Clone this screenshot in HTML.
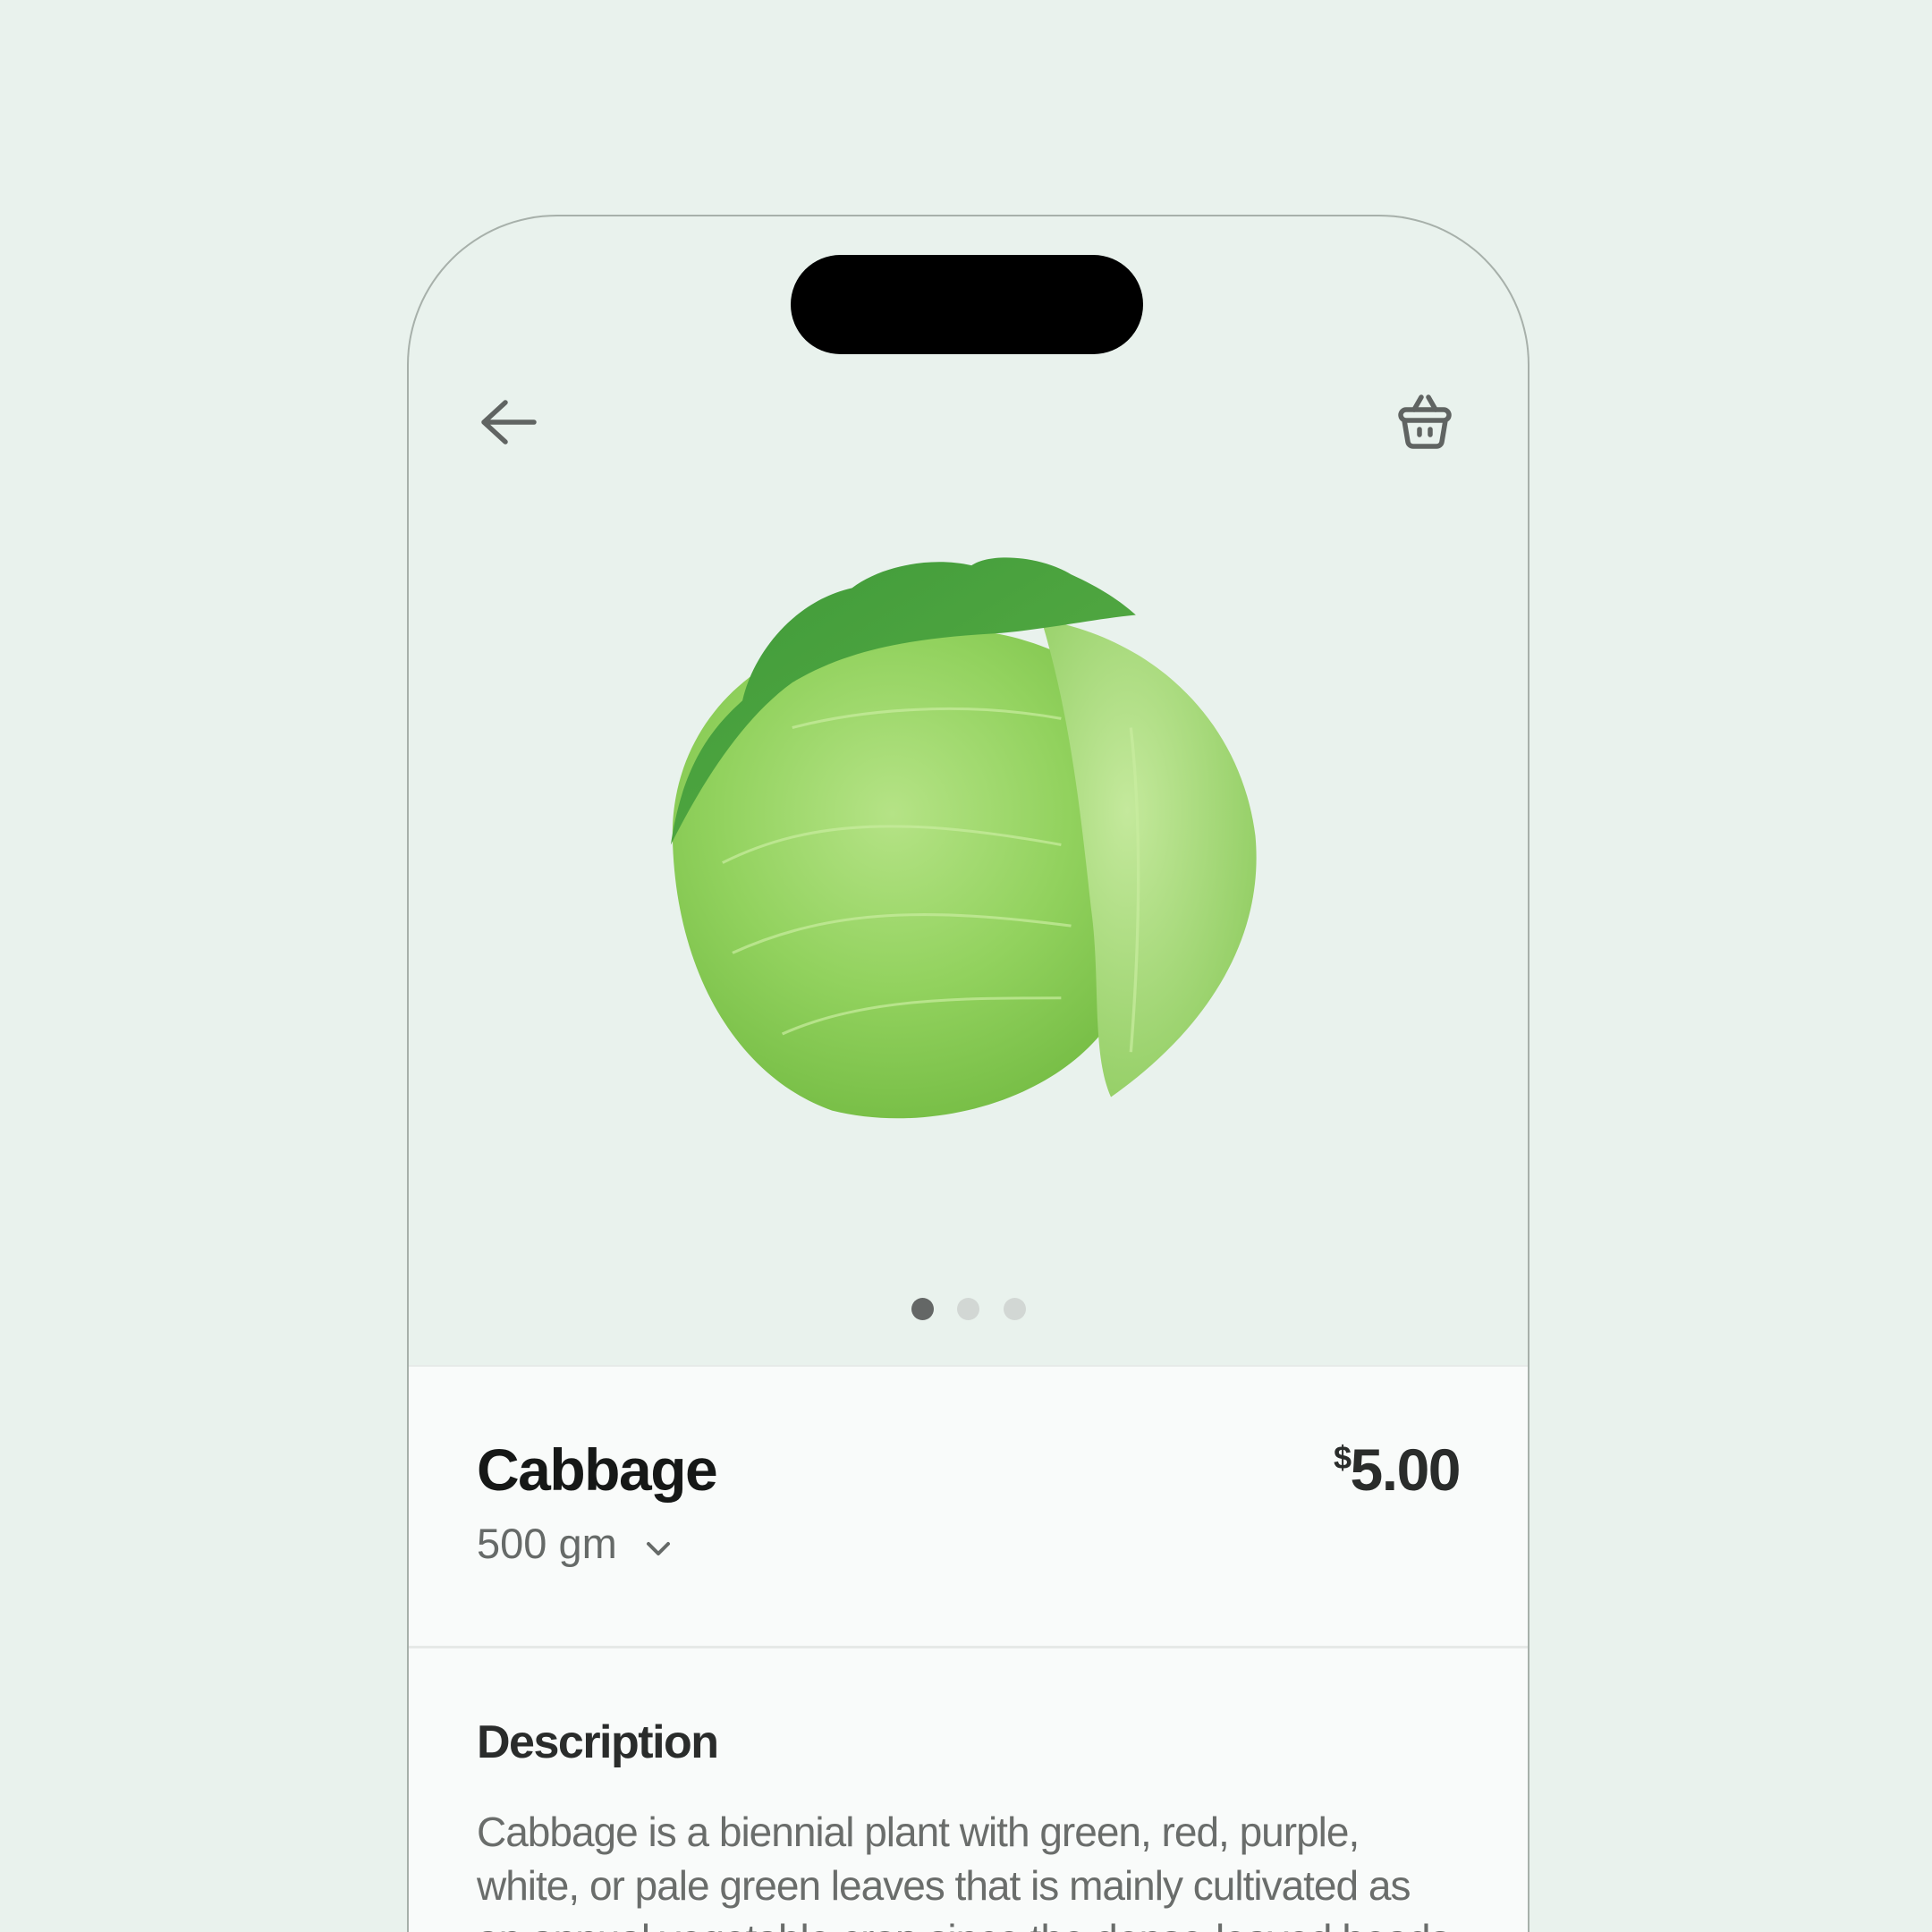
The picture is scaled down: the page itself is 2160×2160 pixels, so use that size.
<!DOCTYPE html>
<html style="overflow:hidden;height:2160px"><head><meta charset="utf-8"><style>
html,body{margin:0;padding:0}
body{width:2160px;height:2160px;background:#e9f2ed;position:relative;overflow:hidden;font-family:"Liberation Sans",sans-serif}
.phone{position:absolute;left:455px;top:240px;width:1251px;height:1930px;border:2px solid #a7b0aa;border-bottom:none;border-radius:168px 168px 0 0;background:#e9f2ed;overflow:hidden}
.notch{position:absolute;left:427px;top:43px;width:394px;height:111px;border-radius:56px;background:#000}
.panel{position:absolute;left:0;top:1284px;width:100%;height:700px;background:#f9fbfa;border-top:2px solid #e6ebe8}
.div{position:absolute;left:0;top:312px;width:100%;height:3px;background:#e6e9e7}
.t{position:absolute;white-space:nowrap}
.dot{position:absolute;width:25px;height:25px;border-radius:50%;top:1209px}
</style></head><body>
<div class="phone">
<div class="notch"></div>
<svg style="position:absolute;left:78px;top:200px" width="70" height="60" viewBox="0 0 70 60"><path d="M62 30H6M30 8L6 30l24 22" fill="none" stroke="#606462" stroke-width="5.5" stroke-linecap="round" stroke-linejoin="round"/></svg>
<svg style="position:absolute;left:1104px;top:196px" width="64" height="66" viewBox="0 0 64 66"><g fill="none" stroke="#606462" stroke-width="5.5" stroke-linecap="round" stroke-linejoin="round"><path d="M20 20L28 6M44 20L36 6"/><rect x="5" y="20" width="54" height="12" rx="6"/><path d="M9 32l4 24a6 6 0 0 0 6 5h26a6 6 0 0 0 6-5l4-24"/><path d="M26 42v6M38 42v6"/></g></svg>
<svg style="position:absolute;left:284px;top:370px" width="746" height="675" viewBox="0 0 670 670" preserveAspectRatio="none">
<defs>
<radialGradient id="g1" cx="0.45" cy="0.38" r="0.65"><stop offset="0" stop-color="#b5e386"/><stop offset="0.55" stop-color="#92d25e"/><stop offset="1" stop-color="#76bd45"/></radialGradient>
<radialGradient id="g2" cx="0.4" cy="0.4" r="0.7"><stop offset="0" stop-color="#c4e99c"/><stop offset="1" stop-color="#8fcc60"/></radialGradient>
<linearGradient id="g3" x1="0" y1="0" x2="1" y2="1"><stop offset="0" stop-color="#3f9a3a"/><stop offset="1" stop-color="#5aae44"/></linearGradient>
</defs>
<path d="M10 330C5 220 70 120 190 95 310 75 430 100 480 200 520 300 500 440 440 540 380 620 260 650 170 625 80 590 15 480 10 330Z" fill="url(#g1)"/>
<path d="M380 80C490 100 580 190 595 320 605 440 540 540 450 610 430 560 440 480 430 400 420 300 410 190 380 80Z" fill="url(#g2)"/>
<path d="M8 330C20 240 50 200 80 170 90 120 130 60 190 45 220 20 270 10 310 20 330 5 380 10 410 30 440 45 460 60 475 75 430 80 390 90 340 95 260 100 190 110 130 150 80 190 40 260 8 330Z" fill="url(#g3)"/>
<g fill="none" stroke="#c9ec9f" stroke-width="3" opacity="0.7"><path d="M60 350C150 300 250 300 400 330M70 450C170 400 270 400 410 420M120 540C200 500 300 500 400 500M130 200C200 180 300 170 400 190M470 200C480 300 480 420 470 560"/></g>
</svg>
<div class="dot" style="left:562px;background:#646766"></div>
<div class="dot" style="left:613px;background:#d2d7d4"></div>
<div class="dot" style="left:665px;background:#d2d7d4"></div>
<div class="panel">
<div class="t" style="left:76px;top:77px;font-size:66px;font-weight:bold;color:#161817;letter-spacing:-1.5px">Cabbage</div>
<div class="t" style="right:76px;top:77px;font-size:66px;font-weight:bold;color:#2a2c2b;letter-spacing:-1.5px"><span style="font-size:36px;vertical-align:24px">$</span>5.00</div>
<div class="t" style="left:76px;top:170px;font-size:47px;color:#666a68">500 gm</div>
<svg style="position:absolute;left:264px;top:192px" width="30" height="22" viewBox="0 0 30 22"><path d="M4 6l11 11 11-11" fill="none" stroke="#666a68" stroke-width="4" stroke-linecap="round" stroke-linejoin="round"/></svg>
<div class="div"></div>
<div class="t" style="left:76px;top:390px;font-size:52px;font-weight:bold;color:#2a2c2b;letter-spacing:-1.5px">Description</div>
<div class="t" style="left:76px;top:490px;font-size:46px;line-height:60px;color:#6a6d6b;letter-spacing:-1px">Cabbage is a biennial plant with green, red, purple,<br>white, or pale green leaves that is mainly cultivated as<br>an annual vegetable crop since the dense-leaved heads</div>
</div>
</div>
</body></html>
